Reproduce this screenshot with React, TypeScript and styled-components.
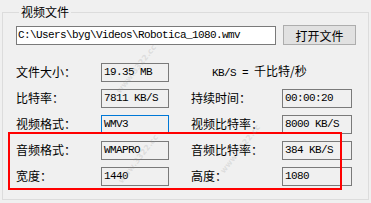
import { Fragment } from "react";
import styled, { createGlobalStyle } from "styled-components";

const GlobalStyle = createGlobalStyle`
  html, body {
    margin: 0;
    padding: 0;
    background: #f0f0f0;
  }
  body {
    width: 371px;
    height: 203px;
    overflow: hidden;
    font-family: "Noto Sans CJK SC", "Noto Sans", sans-serif;
    font-size: 12px;
    color: #000;
  }
`;

const Page = styled.div`
  position: relative;
  width: 371px;
  height: 203px;
  padding: 5px 0 0 2px;
  box-sizing: border-box;
`;

const Group = styled.fieldset`
  margin: 0;
  padding: 0 0 0 13px;
  width: 367px;
  height: 195px;
  box-sizing: border-box;
  border: 1px solid #dcdcdc;
  min-width: 0;
`;

const Legend = styled.legend`
  margin-left: 3px;
  padding: 0 2px;
  line-height: 14px;
  font-size: 12px;
`;

const PathRow = styled.div`
  display: flex;
  align-items: flex-start;
  margin-top: 6px;
  height: 20px;
`;

const PathInput = styled.div`
  margin-top: 1px;
  width: 260px;
  height: 19px;
  box-sizing: border-box;
  background: #fff;
  border: 1px solid #7a7a7a;
  padding-left: 1px;
  font-family: "Liberation Mono", monospace;
  font-size: 11px;
  letter-spacing: -0.6px;
  line-height: 17px;
  white-space: nowrap;
  overflow: hidden;
`;

const Button = styled.div`
  margin-left: 7px;
  width: 73px;
  height: 20px;
  box-sizing: border-box;
  background: #e1e1e1;
  border: 1px solid #adadad;
  display: flex;
  align-items: center;
  justify-content: center;
  font-size: 12px;
`;

const Grid = styled.div`
  display: grid;
  grid-template-columns: 85px 68px 22px 91px 70px;
  grid-auto-rows: 26px;
  align-items: center;
  margin-top: 14px;
`;

const Label = styled.div<{ $col: number }>`
  grid-column: ${(p) => p.$col};
  white-space: nowrap;
  line-height: 14px;
`;

const Value = styled.div<{ $col: number; $focused?: boolean }>`
  grid-column: ${(p) => p.$col};
  height: 19px;
  box-sizing: border-box;
  border: 1px solid ${(p) => (p.$focused ? "#0078d7" : "#7a7a7a")};
  padding-left: 2px;
  font-family: "Liberation Mono", monospace;
  font-size: 11px;
  letter-spacing: -0.6px;
  line-height: 17px;
  white-space: nowrap;
  overflow: hidden;
`;

const Note = styled.div`
  grid-column: 3 / 6;
  padding-left: 43px;
  white-space: nowrap;
  line-height: 14px;
  font-size: 12px;
`;

const NoteMono = styled.span`
  font-family: "Liberation Mono", monospace;
  font-size: 11px;
  letter-spacing: -0.6px;
`;

const Highlight = styled.div`
  position: absolute;
  left: 8px;
  top: 132px;
  width: 334px;
  height: 58px;
  box-sizing: border-box;
  border: 2px solid #ff0000;
  pointer-events: none;
`;

const Watermark = styled.div<{ $x: number; $y: number }>`
  position: absolute;
  left: ${(p) => p.$x}px;
  top: ${(p) => p.$y}px;
  transform: rotate(-52deg);
  transform-origin: left center;
  font-family: "DejaVu Sans", sans-serif;
  font-size: 8px;
  font-weight: bold;
  color: rgba(150, 150, 150, 0.22);
  white-space: nowrap;
  pointer-events: none;
`;

const rows: [string, string, string, string][] = [
  ["比特率：", "7811 KB/S", "持续时间：", "00:00:20"],
  ["视频格式：", "WMV3", "视频比特率：", "8000 KB/S"],
  ["音频格式：", "WMAPRO", "音频比特率：", "384 KB/S"],
  ["宽度：", "1440", "高度：", "1080"],
];

export default function App() {
  return (
    <Page>
      <GlobalStyle />
      <Group>
        <Legend>视频文件</Legend>
        <PathRow>
          <PathInput>C:\Users\byg\Videos\Robotica_1080.wmv</PathInput>
          <Button>打开文件</Button>
        </PathRow>
        <Grid>
          <Label $col={1}>文件大小：</Label>
          <Value $col={2}>19.35 MB</Value>
          <Note>
            <NoteMono>KB/S = </NoteMono>千比特/秒
          </Note>
          {rows.map(([l1, v1, l2, v2]) => (
            <Fragment key={l1}>
              <Label $col={1}>{l1}</Label>
              <Value $col={2} $focused={v1 === "WMV3"}>{v1}</Value>
              <Label $col={4}>{l2}</Label>
              <Value $col={5}>{v2}</Value>
            </Fragment>
          ))}
        </Grid>
      </Group>
      <Highlight />
      <Watermark $x={118} $y={88}>www.3322.cc</Watermark>
      <Watermark $x={120} $y={178}>www.3322.cc</Watermark>
      <Watermark $x={222} $y={168}>www.3322.cc</Watermark>
    </Page>
  );
}
